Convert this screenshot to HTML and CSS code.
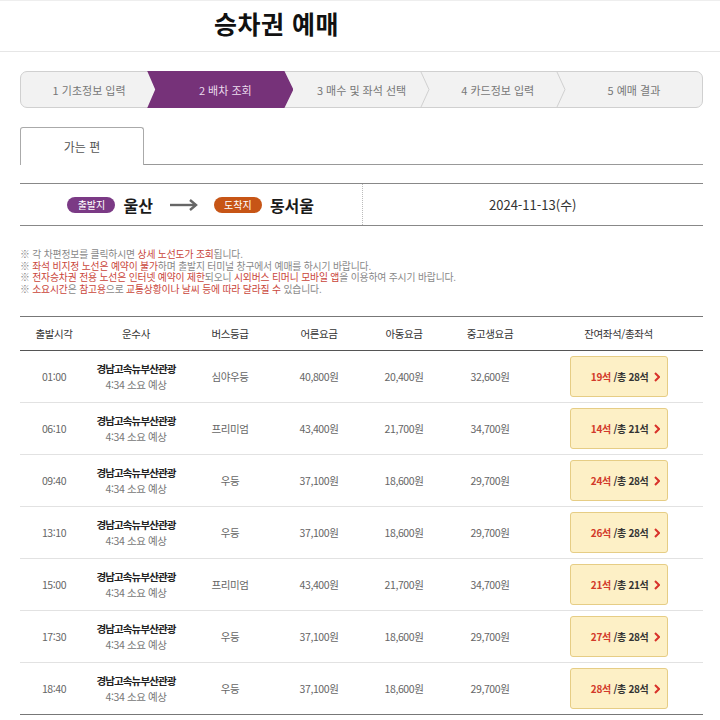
FILE: index.html
```html
<!DOCTYPE html>
<html lang="ko">
<head>
<meta charset="utf-8">
<title>승차권 예매</title>
<link rel="stylesheet" href="styles.css">
</head>
<body>
<header class="header"><h1 class="title">승차권 예매</h1></header>
<main class="wrap">
  <ol class="steps">
    <li class="step"><span>1 기초정보 입력</span></li>
    <li class="step active"><span>2 배차 조회</span></li>
    <li class="step sep"><span>3 매수 및 좌석 선택</span><svg class="chev" viewBox="0 0 10 36" preserveAspectRatio="none"><polyline points="1,0 9,18 1,36" fill="none" stroke="#cfcfcf" stroke-width="1"/></svg></li>
    <li class="step sep"><span>4 카드정보 입력</span><svg class="chev" viewBox="0 0 10 36" preserveAspectRatio="none"><polyline points="1,0 9,18 1,36" fill="none" stroke="#cfcfcf" stroke-width="1"/></svg></li>
    <li class="step"><span>5 예매 결과</span></li>
  </ol>

  <div class="tabs"><div class="tab">가는 편</div></div>

  <div class="route">
    <div class="route-left">
      <span class="badge dep">출발지</span><span class="place">울산</span>
      <svg class="arrow" viewBox="0 0 28 12"><line x1="0" y1="6" x2="26" y2="6" stroke="#666" stroke-width="2.4"/><polyline points="20,1 26,6 20,11" fill="none" stroke="#666" stroke-width="2.4"/></svg>
      <span class="badge arr">도착지</span><span class="place">동서울</span>
    </div>
    <div class="route-right">2024-11-13(수)</div>
  </div>

  <div class="notice">
    <p>※ 각 차편정보를 클릭하시면 <span class="r">상세 노선도가 조회</span>됩니다.</p>
    <p>※ <span class="r">좌석 비지정 노선은 예약이 불가</span>하며 출발지 터미널 창구에서 예매를 하시기 바랍니다.</p>
    <p>※ <span class="r">전자승차권 전용 노선은 인터넷 예약이 제한</span>되오니 <span class="r">시외버스 티머니 모바일 앱</span>을 이용하여 주시기 바랍니다.</p>
    <p>※ <span class="r">소요시간</span>은 <span class="r">참고용</span>으로 <span class="r">교통상황이나 날씨 등에 따라 달라질 수</span> 있습니다.</p>
  </div>

  <div class="table">
    <div class="row head">
      <div>출발시각</div><div>운수사</div><div>버스등급</div><div>어른요금</div><div>아동요금</div><div>중고생요금</div><div>잔여좌석/총좌석</div>
    </div>
    <div class="row">
      <div>01:00</div><div class="co"><b>경남고속뉴부산관광</b><span>4:34 소요 예상</span></div><div>심야우등</div><div>40,800원</div><div>20,400원</div><div>32,600원</div>
      <div><a class="seat"><em>19석</em>&nbsp;/총 28석<svg class="go" viewBox="0 0 6 10"><polyline points="1,1 5,5 1,9" fill="none" stroke="#d8322a" stroke-width="2"/></svg></a></div>
    </div>
    <div class="row">
      <div>06:10</div><div class="co"><b>경남고속뉴부산관광</b><span>4:34 소요 예상</span></div><div>프리미엄</div><div>43,400원</div><div>21,700원</div><div>34,700원</div>
      <div><a class="seat"><em>14석</em>&nbsp;/총 21석<svg class="go" viewBox="0 0 6 10"><polyline points="1,1 5,5 1,9" fill="none" stroke="#d8322a" stroke-width="2"/></svg></a></div>
    </div>
    <div class="row">
      <div>09:40</div><div class="co"><b>경남고속뉴부산관광</b><span>4:34 소요 예상</span></div><div>우등</div><div>37,100원</div><div>18,600원</div><div>29,700원</div>
      <div><a class="seat"><em>24석</em>&nbsp;/총 28석<svg class="go" viewBox="0 0 6 10"><polyline points="1,1 5,5 1,9" fill="none" stroke="#d8322a" stroke-width="2"/></svg></a></div>
    </div>
    <div class="row">
      <div>13:10</div><div class="co"><b>경남고속뉴부산관광</b><span>4:34 소요 예상</span></div><div>우등</div><div>37,100원</div><div>18,600원</div><div>29,700원</div>
      <div><a class="seat"><em>26석</em>&nbsp;/총 28석<svg class="go" viewBox="0 0 6 10"><polyline points="1,1 5,5 1,9" fill="none" stroke="#d8322a" stroke-width="2"/></svg></a></div>
    </div>
    <div class="row">
      <div>15:00</div><div class="co"><b>경남고속뉴부산관광</b><span>4:34 소요 예상</span></div><div>프리미엄</div><div>43,400원</div><div>21,700원</div><div>34,700원</div>
      <div><a class="seat"><em>21석</em>&nbsp;/총 21석<svg class="go" viewBox="0 0 6 10"><polyline points="1,1 5,5 1,9" fill="none" stroke="#d8322a" stroke-width="2"/></svg></a></div>
    </div>
    <div class="row">
      <div>17:30</div><div class="co"><b>경남고속뉴부산관광</b><span>4:34 소요 예상</span></div><div>우등</div><div>37,100원</div><div>18,600원</div><div>29,700원</div>
      <div><a class="seat"><em>27석</em>&nbsp;/총 28석<svg class="go" viewBox="0 0 6 10"><polyline points="1,1 5,5 1,9" fill="none" stroke="#d8322a" stroke-width="2"/></svg></a></div>
    </div>
    <div class="row last">
      <div>18:40</div><div class="co"><b>경남고속뉴부산관광</b><span>4:34 소요 예상</span></div><div>우등</div><div>37,100원</div><div>18,600원</div><div>29,700원</div>
      <div><a class="seat"><em>28석</em>&nbsp;/총 28석<svg class="go" viewBox="0 0 6 10"><polyline points="1,1 5,5 1,9" fill="none" stroke="#d8322a" stroke-width="2"/></svg></a></div>
    </div>
  </div>
</main>
</body>
</html>
```
FILE: styles.css
```css
* { box-sizing: border-box; }
body {
  margin: 0;
  font-family: "Noto Sans CJK KR", "Noto Sans", sans-serif;
  color: #333;
  background: #fff;
  overflow: hidden;
}
.header {
  border-top: 1px solid #eee;
  border-bottom: 1px solid #e6e6e6;
  height: 52px;
}
.title {
  margin: 0;
  padding-left: 214px;
  font-size: 25px;
  font-weight: 700;
  line-height: 44px;
  color: #111;
  letter-spacing: 0.5px;
}
.wrap { padding: 0 17px 0 20px; }

.steps {
  list-style: none;
  margin: 19px 0 0;
  padding: 0;
  display: flex;
  height: 37px;
  border: 1px solid #d0d0d0;
  border-radius: 7px;
  background: #f2f2f2;
}
.step {
  flex: 1;
  position: relative;
  display: flex;
  align-items: center;
  justify-content: center;
  font-size: 11px;
  color: #777;
}
.step span { position: relative; z-index: 1; }
.step.active { color: #eadbec; }
.step.active::before {
  content: "";
  position: absolute;
  top: -1px;
  bottom: -1px;
  left: -10px;
  right: 0;
  background: #763279;
  clip-path: polygon(0 0, calc(100% - 9px) 0, 100% 50%, calc(100% - 9px) 100%, 0 100%, 8px 50%);
}
.chev {
  position: absolute;
  right: 0;
  top: 0;
  width: 10px;
  height: 100%;
}

.tabs {
  margin-top: 19px;
  border-bottom: 1px solid #999;
  display: flex;
}
.tab {
  width: 124px;
  height: 38px;
  margin-bottom: -1px;
  border: 1px solid #aaa;
  border-bottom: 0;
  border-radius: 3px 3px 0 0;
  background: #fff;
  display: flex;
  align-items: center;
  justify-content: center;
  font-size: 12px;
  color: #555;
}

.route {
  margin-top: 18px;
  border-top: 1px solid #888;
  border-bottom: 1px solid #888;
  height: 43px;
  display: grid;
  grid-template-columns: 1fr 1fr;
}
.route-left {
  display: flex;
  align-items: center;
  justify-content: center;
}
.badge {
  display: inline-flex;
  align-items: center;
  justify-content: center;
  width: 48px;
  height: 16px;
  border-radius: 8px;
  font-size: 10px;
  color: #fff;
}
.badge.dep { background: #7b3a85; }
.badge.arr { background: #c75516; }
.place {
  margin-left: 8px;
  font-size: 16px;
  font-weight: 700;
  color: #1a1a1a;
}
.arrow { width: 28px; height: 12px; margin: 0 16px 0 17px; }
.route-right {
  border-left: 1px dotted #bbb;
  display: flex;
  align-items: center;
  justify-content: center;
  font-size: 13px;
  color: #333;
}

.notice { margin-top: 23px; }
.notice p {
  margin: 0;
  font-size: 9.8px;
  line-height: 11.6px;
  color: #888;
  letter-spacing: -0.15px;
  white-space: nowrap;
}
.notice .r { color: #c9453a; }

.table { margin-top: 21px; }
.row {
  display: grid;
  grid-template-columns: 68px 96px 92px 86px 84px 88px 1fr;
  height: 52px;
  border-bottom: 1px solid #e2e2e2;
  font-size: 10.5px;
  letter-spacing: -0.4px;
  color: #666;
}
.row > div {
  display: flex;
  flex-direction: column;
  align-items: center;
  justify-content: center;
  text-align: center;
}
.row.head {
  height: 35px;
  border-top: 1px solid #777;
  border-bottom: 1px solid #555;
  color: #333;
}
.row.last { border-bottom: 1px solid #777; }
.co b { font-weight: 700; color: #222; line-height: 16px; letter-spacing: -0.9px; }
.co span { color: #777; line-height: 16px; }
.seat {
  width: 98px;
  height: 41px;
  border: 1px solid #e6cd85;
  border-radius: 3px;
  background: #fdf0c6;
  display: flex;
  align-items: center;
  justify-content: flex-end;
  padding-right: 7px;
  font-size: 10px;
  font-weight: 700;
  letter-spacing: -0.3px;
  color: #333;
}
.seat em { font-style: normal; color: #d23a2a; }
.go { width: 6px; height: 10px; margin-left: 5px; }
```
